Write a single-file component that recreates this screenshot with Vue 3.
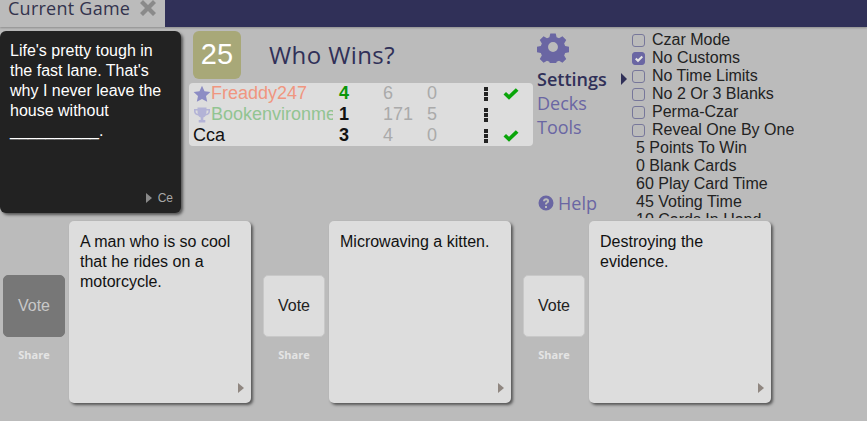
<script setup>
const players = [
  { name: 'Freaddy247', cls: 'salmon', icon: 'star', score: 4, scoreCls: 'lead', a: 6, b: 0, done: true },
  { name: 'Bookenvironmentalist', cls: 'green', icon: 'trophy', score: 1, scoreCls: '', a: 171, b: 5, done: false },
  { name: 'Cca', cls: '', icon: '', score: 3, scoreCls: '', a: 4, b: 0, done: true }
]
const checks = [
  { label: 'Czar Mode', on: false },
  { label: 'No Customs', on: true },
  { label: 'No Time Limits', on: false },
  { label: 'No 2 Or 3 Blanks', on: false },
  { label: 'Perma-Czar', on: false },
  { label: 'Reveal One By One', on: false }
]
const stats = ['5 Points To Win', '0 Blank Cards', '60 Play Card Time', '45 Voting Time', '10 Cards In Hand']
const answers = [
  { text: 'A man who is so cool that he rides on a motorcycle.', voted: true },
  { text: 'Microwaving a kitten.', voted: false },
  { text: 'Destroying the evidence.', voted: false }
]
</script>

<template>
  <div class="page">
    <div class="tabs">
      <div class="tab">
        <span>Current Game</span>
        <svg class="close" viewBox="0 0 16 16" width="16" height="16">
          <path d="M3 0 8 5 13 0 16 3 11 8 16 13 13 16 8 11 3 16 0 13 5 8 0 3z" fill="#8a8a8a" />
        </svg>
      </div>
    </div>

    <div class="top">
      <div class="black-card">
        <div class="black-text">Life's pretty tough in the fast lane. That's why I never leave the house without __________.</div>
        <div class="black-foot"><i class="tri grey"></i><span>Ce</span></div>
      </div>

      <div class="middle">
        <div class="head">
          <div class="timer">25</div>
          <div class="title">Who Wins?</div>
        </div>
        <div class="players">
          <div class="row" v-for="p in players" :key="p.name">
            <div class="who">
              <svg v-if="p.icon === 'star'" class="ico" viewBox="0 0 18 18" width="18" height="18">
                <path d="M9 .8l2.500 5.400 5.900.7-4.400 4 1.200 5.900L9 13.900l-5.200 2.900L5 10.900.6 6.900l5.900-.7z" fill="#8c8cc4" />
              </svg>
              <svg v-if="p.icon === 'trophy'" class="ico" viewBox="0 0 18 18" width="18" height="18">
                <path d="M4.500 1.500h9V3H17v2.200c0 2.400-1.800 4-4.200 4.300-.6 1-1.400 1.700-2.500 2V14h2v2.500H5.700V14h2v-2.500c-1.100-.3-1.900-1-2.500-2C2.800 9.200 1 7.600 1 5.200V3h3.500zM2.600 4.500v.8c0 1.300.8 2.200 2.200 2.600-.2-1-.3-2.200-.3-3.400zm12.800 0h-1.900c0 1.200-.1 2.400-.3 3.400 1.400-.4 2.200-1.300 2.200-2.600z" fill="#b3b3d6" />
              </svg>
              <span class="name" :class="p.cls">{{ p.name }}</span>
            </div>
            <div class="score" :class="p.scoreCls">{{ p.score }}</div>
            <div class="num first">{{ p.a }}</div>
            <div class="num second">{{ p.b }}</div>
            <div class="dots"><b></b><b></b><b></b></div>
            <div class="check">
              <svg v-if="p.done" viewBox="0 0 16 12" width="16" height="12">
                <path d="M.5 6.500 3 4 6 6.800 12.800.3 15.500 2.800 6 11.700z" fill="#0aa50a" />
              </svg>
            </div>
          </div>
        </div>
      </div>

      <div class="menu">
        <svg class="gear" viewBox="0 0 32 32" width="32" height="32">
          <path fill-rule="evenodd" d="M13 1h6l1 4.300 2.700 1.100 3.800-2.300 4.200 4.200-2.300 3.800 1.100 2.700 4.300 1v6l-4.300 1-1.100 2.700 2.300 3.800-4.200 4.200-3.800-2.300-2.700 1.100-1 4.300h-6l-1-4.300-2.700-1.100-3.800 2.300-4.200-4.200 2.300-3.800-1.100-2.700-4.300-1v-6l4.300-1 1.100-2.700-2.300-3.800 4.200-4.200 3.800 2.300 2.700-1.100zM16 10.500a5.500 5.500 0 1 0 0 11 5.500 5.500 0 0 0 0-11z" fill="#6a66a3" transform="translate(1.600 1.600) scale(.9)" />
        </svg>
        <div class="menu-item active">Settings <i class="tri navy"></i></div>
        <div class="menu-item">Decks</div>
        <div class="menu-item">Tools</div>
        <div class="help">
          <svg viewBox="0 0 16 16" width="16" height="16">
            <path fill-rule="evenodd" d="M8 .5a7.500 7.500 0 1 0 0 15 7.500 7.500 0 0 0 0-15zM7 11h2v2H7zM5 6.200C5 4.500 6.300 3.300 8.100 3.300c1.700 0 3 1.100 3 2.600 0 1.300-.8 1.900-1.500 2.400-.5.300-.7.500-.7 1.100H7c0-1.300.5-1.900 1.300-2.400.6-.4.800-.6.800-1 0-.5-.4-.8-1-.8-.7 0-1.100.4-1.200 1.100z" fill="#6a66a3" />
          </svg>
          <span>Help</span>
        </div>
      </div>

      <div class="options">
        <div class="check-row" v-for="c in checks" :key="c.label">
          <span class="box" :class="{ on: c.on }">
            <svg v-if="c.on" viewBox="0 0 12 12" width="12" height="12">
              <path d="M2 6.200 3.500 4.800 5 6.300 8.600 2.800 10 4.200 5 9.200z" fill="#e4e4e4" />
            </svg>
          </span>
          <span>{{ c.label }}</span>
        </div>
        <div class="stat" v-for="s in stats" :key="s">{{ s }}</div>
      </div>
    </div>

    <div class="answers">
      <div class="answer" v-for="a in answers" :key="a.text">
        <div class="vote-col">
          <button class="vote" :class="{ voted: a.voted }">Vote</button>
          <div class="share">Share</div>
        </div>
        <div class="card">
          <div>{{ a.text }}</div>
          <i class="tri taupe"></i>
        </div>
      </div>
    </div>
  </div>
</template>

<style>
html, body {
  margin: 0;
  background: #bbbbbb;
}
</style>

<style scoped>
.page {
  width: 867px;
  height: 421px;
  overflow: hidden;
  background: #bbbbbb;
  font-family: "Liberation Sans", Arial, sans-serif;
  color: #111;
}
.tabs {
  height: 27px;
  background: #303058;
  box-shadow: 0 1px 2px rgba(0, 0, 0, .25);
}
.tab {
  width: 165px;
  height: 27px;
  background: #bbbbbb;
  display: flex;
  align-items: flex-start;
  padding-left: 8px;
  box-sizing: border-box;
  gap: 10px;
  font: 500 18px/16px "Open Sans", sans-serif;
  letter-spacing: .25px;
  color: #33334d;
}
.close {
  flex: none;
}
.top {
  display: flex;
  height: 194px;
  padding-top: 4px;
  box-sizing: border-box;
  overflow: hidden;
}
.black-card {
  width: 181px;
  height: 182px;
  flex: none;
  position: relative;
  box-sizing: border-box;
  padding: 10px;
  background: #222222;
  color: #fff;
  border-radius: 6px;
  box-shadow: 2px 2px 3px rgba(0, 0, 0, .55);
  font-size: 16px;
  line-height: 20px;
}
.black-foot {
  position: absolute;
  right: 8px;
  bottom: 5px;
  display: flex;
  align-items: center;
  gap: 6px;
  font-size: 12px;
  color: #a8a8a8;
}
.tri {
  display: inline-block;
  width: 0;
  height: 0;
  border-style: solid;
  border-width: 5px 0 5px 6px;
  border-color: transparent;
}
.tri.grey { border-left-color: #8a8a8a; }
.tri.navy { border-left-color: #303058; }
.tri.taupe {
  border-left-color: #8f8680;
  position: absolute;
  right: 7px;
  bottom: 10px;
}
.middle {
  width: 344px;
  margin-left: 8px;
  flex: none;
}
.head {
  display: flex;
  align-items: center;
  padding-left: 4px;
  height: 48px;
}
.timer {
  width: 48px;
  height: 48px;
  border-radius: 6px;
  background: #a8a878;
  color: #fff;
  font-size: 29px;
  line-height: 47px;
  text-align: center;
}
.title {
  margin-left: 28px;
  font: 500 24px/30px "Open Sans", sans-serif;
  letter-spacing: .4px;
  color: #303058;
}
.players {
  margin-top: 4px;
  background: #dddddd;
  border-radius: 4px;
  height: 63px;
}
.row {
  display: flex;
  align-items: center;
  height: 21px;
  font-size: 18px;
}
.who {
  display: flex;
  align-items: center;
  width: 140px;
  margin-left: 4px;
  overflow: hidden;
  white-space: nowrap;
  flex: none;
}
.ico {
  flex: none;
}
.salmon { color: #f09680; }
.green { color: #92c492; }
.score {
  width: 10px;
  margin-left: 6px;
  font-weight: 700;
  color: #111;
}
.score.lead { color: #0a960a; }
.num {
  color: #aaaaaa;
}
.first {
  width: 44px;
  margin-left: 34px;
}
.second {
  width: 30px;
  margin-left: 0;
}
.dots {
  display: flex;
  flex-direction: column;
  gap: 1px;
  margin-left: 27px;
  width: 4px;
}
.dots b {
  width: 4px;
  height: 4px;
  background: #222;
}
.check {
  margin-left: 15px;
  width: 16px;
  height: 12px;
}
.check svg {
  display: block;
}
.menu {
  width: 94px;
  flex: none;
  margin-left: 4px;
  position: relative;
  font: 400 18px/24px "Open Sans", sans-serif;
  color: #6a66a3;
}
.gear {
  display: block;
  margin-bottom: 4px;
}
.menu-item {
  height: 24px;
}
.menu-item.active {
  color: #303058;
  font-weight: 600;
  position: relative;
}
.menu-item.active .tri {
  position: absolute;
  left: 84px;
  top: 6px;
  border-width: 6px 0 6px 6px;
}
.help {
  margin-top: 52px;
  display: flex;
  align-items: center;
  gap: 4px;
  padding-left: 1px;
}
.options {
  height: 187px;
  overflow: hidden;
  padding-left: 1px;
  font-size: 16px;
  line-height: 18px;
  color: #222;
}
.check-row {
  display: flex;
  align-items: center;
  height: 18px;
  gap: 7px;
}
.box {
  width: 13px;
  height: 13px;
  box-sizing: border-box;
  border: 1px solid #77779a;
  border-radius: 3px;
  display: block;
  flex: none;
}
.box.on {
  background: #6a66a3;
  border-color: #6a66a3;
}
.box svg {
  display: block;
  margin: 0 0 0 -.5px;
}
.stat {
  padding-left: 4px;
}
.answers {
  display: flex;
  padding-left: 3px;
  gap: 12px;
}
.answer {
  display: flex;
  align-items: flex-start;
  gap: 4px;
  width: 248px;
  flex: none;
}
.vote-col {
  width: 62px;
  flex: none;
  padding-top: 54px;
  text-align: center;
}
.vote {
  display: block;
  width: 62px;
  height: 62px;
  padding: 0 0 1px;
  border: 1px solid #c8c8c8;
  border-radius: 5px;
  background: #dddddd;
  color: #222;
  font: 16px "Liberation Sans", Arial, sans-serif;
}
.vote.voted {
  background: #777777;
  border-color: #777777;
  color: #c8c8c8;
}
.share {
  margin-top: 11px;
  font: 700 11px/14px "Open Sans", sans-serif;
  color: #e4e4e4;
}
.card {
  width: 182px;
  height: 182px;
  flex: none;
  position: relative;
  box-sizing: border-box;
  padding: 11px;
  background: #dddddd;
  border-radius: 5px;
  box-shadow: 2px 2px 3px rgba(0, 0, 0, .55);
  font-size: 16px;
  line-height: 20px;
  color: #111;
}
</style>
